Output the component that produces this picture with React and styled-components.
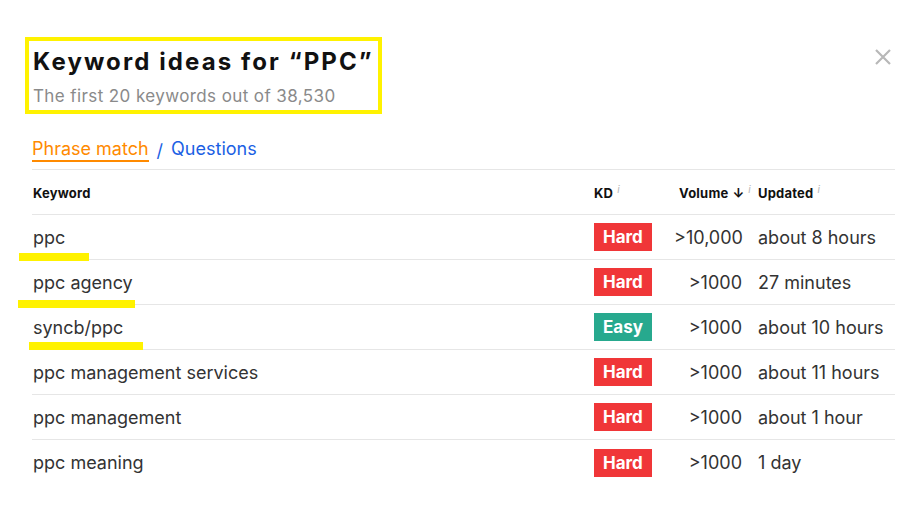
import React from "react";
import styled, { createGlobalStyle } from "styled-components";

const GlobalStyle = createGlobalStyle`
  body {
    margin: 0;
    background: #ffffff;
    font-family: Inter, "Noto Sans", Arial, sans-serif;
    color: #333333;
  }
`;

const Page = styled.div`
  position: relative;
  width: 915px;
  height: 513px;
  padding: 37px 20px 0 25px;
  box-sizing: border-box;
`;

const TitleBox = styled.div`
  display: inline-flex;
  flex-direction: column;
  border: 4px solid #fff200;
  padding: 6px 4px 4px 4px;
`;

const Title = styled.h1`
  margin: 0;
  font-size: 24px;
  line-height: 29px;
  font-weight: 700;
  letter-spacing: 2.1px;
  color: #111111;
`;

const Subtitle = styled.div`
  margin-top: 10px;
  font-size: 17px;
  line-height: 20px;
  letter-spacing: 0.4px;
  color: #8a8a8a;
`;

const Close = styled.button`
  position: absolute;
  top: 48px;
  right: 23px;
  padding: 0;
  border: 0;
  background: none;
  width: 18px;
  height: 18px;
`;

const Tabs = styled.div`
  display: flex;
  align-items: center;
  gap: 8px;
  margin: 17px 0 0 7px;
  width: 863px;
  height: 38px;
  border-bottom: 1px solid #e6e6e6;
  font-size: 18px;
`;

const Tab = styled.span`
  color: ${(p) => (p.active ? "#ff8a00" : "#1b5fe4")};
  border-bottom: ${(p) => (p.active ? "2px solid #ff8a00" : "2px solid transparent")};
  padding-bottom: 1px;
`;

const Slash = styled.span`
  color: #1b5fe4;
`;

const Table = styled.div`
  margin-left: 7px;
  width: 863px;
`;

const Row = styled.div`
  position: relative;
  display: grid;
  grid-template-columns: 561px 80px 84px 1fr;
  align-items: center;
  height: 45px;
  padding-top: ${(p) => (p.head ? "2px" : "0")};
  border-bottom: ${(p) => (p.last ? "none" : "1px solid #e6e6e6")};
  box-sizing: border-box;
  padding-left: 1px;
`;

const Head = styled.div`
  font-size: 13px;
  font-weight: 700;
  letter-spacing: 0.2px;
  color: #111111;
  display: flex;
  align-items: flex-start;
  justify-content: ${(p) => (p.right ? "flex-end" : "flex-start")};
  padding-right: ${(p) => (p.right ? "7px" : "0")};
`;

const Info = styled.sup`
  font-size: 10px;
  font-weight: 400;
  font-style: italic;
  color: #b5b5b5;
  margin-left: 4px;
  position: relative;
  top: -2px;
`;

const Arrow = styled.span`
  margin-left: 4px;
  font-size: 13px;
`;

const Cell = styled.div`
  font-size: 18px;
  color: #333333;
  text-align: ${(p) => (p.right ? "right" : "left")};
  padding-right: ${(p) => (p.right ? "16px" : "0")};
  white-space: nowrap;
`;

const Badge = styled.span`
  display: inline-flex;
  align-items: center;
  height: 28px;
  padding: 0 9px;
  font-size: 17px;
  font-weight: 700;
  color: #ffffff;
  background: ${(p) => (p.easy ? "#27a98e" : "#f03638")};
`;

const Marker = styled.div`
  position: absolute;
  left: ${(p) => p.left}px;
  bottom: ${(p) => p.bottom}px;
  width: ${(p) => p.width}px;
  height: 8px;
  background: #fff200;
`;

const rows = [
  { kw: "ppc", easy: false, vol: ">10,000", upd: "about 8 hours", mark: { left: -13, width: 70, bottom: -2 } },
  { kw: "ppc agency", easy: false, vol: ">1000", upd: "27 minutes", mark: { left: -14, width: 117, bottom: -4 } },
  { kw: "syncb/ppc", easy: true, vol: ">1000", upd: "about 10 hours", mark: { left: -3, width: 114, bottom: -1 } },
  { kw: "ppc management services", easy: false, vol: ">1000", upd: "about 11 hours" },
  { kw: "ppc management", easy: false, vol: ">1000", upd: "about 1 hour" },
  { kw: "ppc meaning", easy: false, vol: ">1000", upd: "1 day" },
];

export default function App() {
  return (
    <>
      <GlobalStyle />
      <Page>
        <TitleBox>
          <Title>Keyword ideas for “PPC”</Title>
          <Subtitle>The first 20 keywords out of 38,530</Subtitle>
        </TitleBox>
        <Close aria-label="close">
          <svg width="18" height="18" viewBox="0 0 18 18">
            <path d="M2 2 L16 16 M16 2 L2 16" stroke="#b8b8b8" strokeWidth="2.2" />
          </svg>
        </Close>

        <Tabs>
          <Tab active>Phrase match</Tab>
          <Slash>/</Slash>
          <Tab>Questions</Tab>
        </Tabs>

        <Table>
          <Row head>
            <Head>Keyword</Head>
            <Head>
              KD<Info>i</Info>
            </Head>
            <Head right>
              Volume<Arrow>↓</Arrow>
              <Info>i</Info>
            </Head>
            <Head>
              Updated<Info>i</Info>
            </Head>
          </Row>
          {rows.map((r, i) => (
            <Row key={r.kw} last={i === rows.length - 1}>
              <Cell>{r.kw}</Cell>
              <div>
                <Badge easy={r.easy}>{r.easy ? "Easy" : "Hard"}</Badge>
              </div>
              <Cell right>{r.vol}</Cell>
              <Cell>{r.upd}</Cell>
              {r.mark && <Marker {...r.mark} />}
            </Row>
          ))}
        </Table>
      </Page>
    </>
  );
}
